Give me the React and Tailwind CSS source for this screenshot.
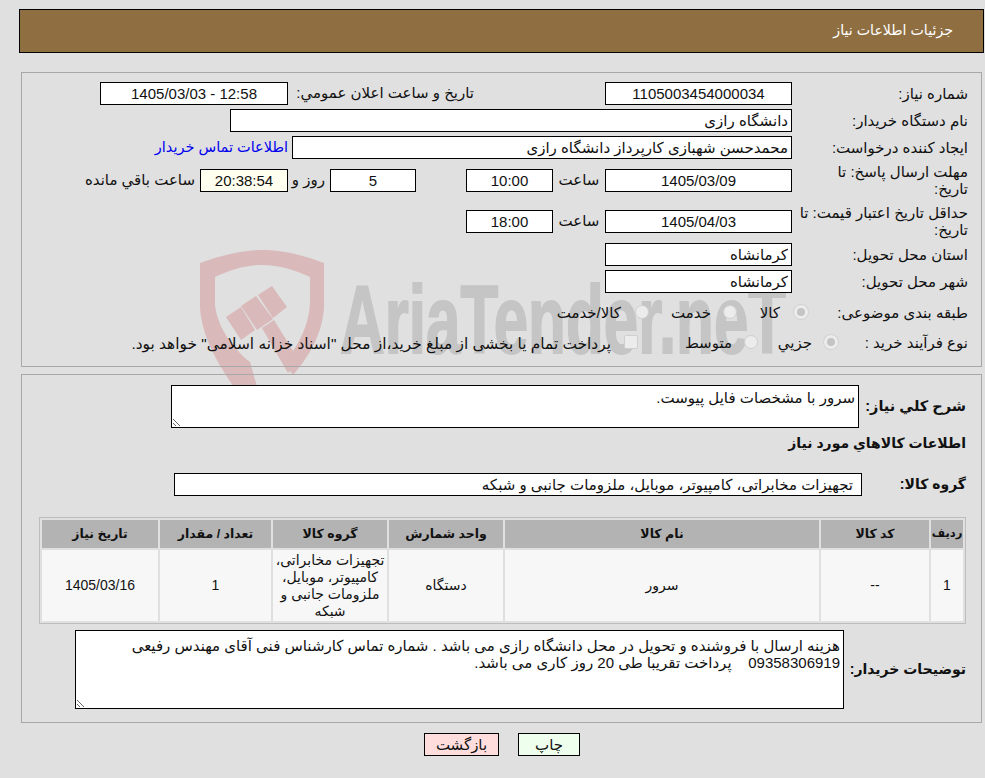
import React from "react";

const FONT = "font-['Liberation_Sans','DejaVu_Sans',sans-serif]";
const FIELD = "h-[23px] shrink-0 border border-black px-[3px] text-[15px] text-[#111] outline-none";
const AREA = "shrink-0 border border-black bg-white px-[3px] text-[15px] leading-[17px] text-[#111] outline-none";

function Field({ value, className = "", bg = "bg-white", center = true }) {
  return (
    <input
      readOnly
      dir="rtl"
      value={value}
      className={`${FIELD} ${bg} ${center ? "text-center" : "text-right"} ${className}`}
    />
  );
}

function Row({ label, className = "", labelWidth = "w-[176px]", children }) {
  return (
    <div className={`flex items-center ${className}`}>
      <div className={`shrink-0 whitespace-nowrap leading-[17px] ${labelWidth}`}>{label}</div>
      {children}
    </div>
  );
}

function Option({ type = "radio", checked = false, label, className = "", gap = "gap-[12px]" }) {
  const shape = type === "radio" ? "rounded-full" : "rounded-[2px]";
  const tone = checked
    ? "border-[3px] border-[#ececec] bg-[#c4c4c4] ring-1 ring-[#d2d2d2]"
    : "border border-[#cfcfcf] bg-[#ececec]";
  return (
    <label className={`flex shrink-0 items-center whitespace-nowrap ${gap} ${className}`}>
      <input
        type={type}
        disabled
        checked={checked}
        readOnly
        className={`h-[14px] w-[14px] shrink-0 appearance-none ${shape} ${tone}`}
      />
      <span className="mt-[3px]">{label}</span>
    </label>
  );
}

function Watermark() {
  return (
    <div className="pointer-events-none absolute inset-0">
      <svg className="absolute left-[195px] top-[245px] h-[145px] w-[135px]" viewBox="195 245 135 145">
        <g fill="#d9b9ba">
          <path d="M262 250C285 250 305 256 324 263V308C322 335 308 358 293 375L285 363C298 345 310 325 310 300V277C295 270 280 265 262 265C245 265 230 270 215 277V305C218 330 235 350 250 362L258 390H236C215 360 202 335 200 308V263C220 256 240 250 262 250Z" />
          <path d="M226 317L241 307L255 330L241 340Z" />
          <path d="M241 306L256 296L273 319L257 330Z" />
          <path d="M258 295L272 286L287 307L273 318Z" />
          <path d="M262 328L274 320L300 362L288 373Z" />
        </g>
      </svg>
      <div className="absolute left-[340px] top-[272px] origin-left scale-x-[0.645] whitespace-nowrap font-['Liberation_Sans',sans-serif] text-[96px] font-bold leading-none text-[#c5c5c5] [-webkit-text-stroke:2px_#c5c5c5]">
        AriaTender.neT
      </div>
    </div>
  );
}

const HEADS = [
  ["ردیف", "w-[32px] text-[11.5px]"],
  ["کد کالا", "w-[108px] text-[12.5px]"],
  ["نام کالا", "w-[314px] text-[12.5px]"],
  ["واحد شمارش", "w-[114px] text-[12.5px]"],
  ["گروه کالا", "w-[114px] text-[12.5px]"],
  ["تعداد / مقدار", "w-[111px] text-[12.5px]"],
  ["تاریخ نیاز", "w-[116px] text-[12.5px]"],
];

const CELLS = [
  "1",
  "--",
  "سرور",
  "دستگاه",
  "تجهیزات مخابراتی، کامپیوتر، موبایل، ملزومات جانبی و شبکه",
  "1",
  "1405/03/16",
];

export default function App() {
  return (
    <div className={`relative min-h-[778px] overflow-hidden bg-[#e0e0e0] text-[15px] text-[#111] ${FONT}`} dir="rtl">
      <Watermark />
      <div className="relative">
        <div className="ml-[19px] mr-[1px] flex h-[44px] translate-y-[9px] items-center border border-black bg-[#8f6f42] pr-[30px] text-[14.2px] text-white">
          جزئیات اطلاعات نیاز
        </div>

        <div className="ml-[21px] mr-[3px] mt-[28px] h-[295px] border border-[#a8a8a8] pr-[13px] pt-[9px]">
          <Row label="شماره نیاز:">
            <Field value="1105003454000034" className="w-[187px]" />
            <div className="w-[317px] shrink-0 whitespace-nowrap pr-[131px]">تاریخ و ساعت اعلان عمومي:</div>
            <Field value="12:58 - 1405/03/03" className="w-[188px]" />
          </Row>
          <Row label="نام دستگاه خریدار:" className="mt-[4px]">
            <Field value="دانشگاه رازی" center={false} className="w-[562px]" />
          </Row>
          <Row label="ایجاد کننده درخواست:" className="mt-[4px]">
            <Field value="محمدحسن شهبازی کارپرداز دانشگاه رازی" center={false} className="w-[500px]" />
            <a href="#" className="mr-[4px] whitespace-nowrap text-[14.5px] text-[#0000ee]">اطلاعات تماس خریدار</a>
          </Row>
          <Row label={<>مهلت ارسال پاسخ: تا<br />تاریخ:</>} className="mt-[4px] h-[34px]">
            <Field value="1405/03/09" className="w-[187px]" />
            <div className="w-[52px] shrink-0 text-center">ساعت</div>
            <Field value="10:00" className="w-[87px]" />
            <div className="w-[50px] shrink-0" />
            <Field value="5" className="w-[86px]" />
            <div className="w-[42px] shrink-0 whitespace-nowrap pr-[5px]">روز و</div>
            <Field value="20:38:54" bg="bg-[#fffff0]" className="w-[88px]" />
            <div className="mr-[5px] whitespace-nowrap">ساعت باقي مانده</div>
          </Row>
          <Row label={<>حداقل تاریخ اعتبار قیمت: تا<br />تاریخ:</>} className="mt-[7px] h-[34px]">
            <Field value="1405/04/03" className="w-[187px]" />
            <div className="w-[52px] shrink-0 text-center">ساعت</div>
            <Field value="18:00" className="w-[87px]" />
          </Row>
          <Row label="استان محل تحویل:" className="mt-[5px]">
            <Field value="کرمانشاه" center={false} className="w-[187px]" />
          </Row>
          <Row label="شهر محل تحویل:" className="mt-[4px]">
            <Field value="کرمانشاه" center={false} className="w-[187px]" />
          </Row>
          <Row label="طبقه بندی موضوعی:" labelWidth="w-[160px]" className="mt-[8px] h-[22px]">
            <Option checked label="کالا" gap="gap-[14px]" className="w-[71px]" />
            <Option label="خدمت" gap="gap-[12px]" className="w-[88px]" />
            <Option label="کالا/خدمت" gap="gap-[14px]" />
          </Row>
          <Row label="نوع فرآیند خرید :" labelWidth="w-[130px]" className="mt-[8px] h-[22px]">
            <Option checked label="جزيي" className="w-[80px]" />
            <Option label="متوسط" className="w-[120px]" />
            <Option
              type="checkbox"
              gap="gap-[13px]"
              className="text-[15.4px]"
              label={'پرداخت تمام یا بخشی از مبلغ خرید،از محل "اسناد خزانه اسلامی" خواهد بود.'}
            />
          </Row>
        </div>

        <div className="ml-[21px] mr-[3px] mt-[7px] h-[349px] border border-[#a8a8a8] pr-[15px] pt-[10px]">
          <div className="flex items-center">
            <div className="w-[107px] shrink-0 whitespace-nowrap text-[14.5px] font-bold">شرح کلي نیاز:</div>
            <textarea
              readOnly
              dir="rtl"
              value="سرور با مشخصات فایل پیوست."
              className={`h-[43px] w-[688px] py-[3px] ${AREA}`}
            />
          </div>
          <div className="mt-[5px] text-[14px] font-bold">اطلاعات کالاهاي مورد نیاز</div>
          <div className="mt-[19px] flex items-center">
            <div className="w-[104px] shrink-0 text-[14px] font-bold">گروه کالا:</div>
            <Field value="تجهیزات مخابراتی، کامپیوتر، موبایل، ملزومات جانبی و شبکه" center={false} className="w-[688px] pr-[8px]" />
          </div>

          <table className="mt-[21px] w-[927px] table-fixed border-separate border-spacing-[2px] border border-[#bdbdbd] text-[14px]">
            <thead>
              <tr>
                {HEADS.map(([h, w]) => (
                  <th key={h} className={`h-[28px] bg-[#b3b3b3] p-0 text-center font-bold ${w}`}>{h}</th>
                ))}
              </tr>
            </thead>
            <tbody>
              <tr>
                {CELLS.map((c, i) => (
                  <td key={i} className="h-[71px] bg-[#f7f7f7] p-0 text-center align-middle leading-[17px]">{c}</td>
                ))}
              </tr>
            </tbody>
          </table>

          <div className="mt-[6px] flex items-center">
            <div className="w-[122px] shrink-0 whitespace-nowrap text-[14px] font-bold">توضیحات خریدار:</div>
            <textarea
              readOnly
              dir="rtl"
              value={"هزینه ارسال با فروشنده و تحویل در محل دانشگاه رازی می باشد . شماره تماس کارشناس فنی آقای مهندس رفیعی\n09358306919    پرداخت تقریبا طی 20 روز کاری می باشد."}
              className={`h-[79px] w-[769px] pb-[3px] pt-[6px] ${AREA}`}
            />
          </div>
        </div>

        <div className="mt-[10px] flex justify-center gap-[19px] pl-[19px]">
          <button className="h-[23px] w-[62px] border border-black bg-[#eeffee] text-[15px]">چاپ</button>
          <button className="h-[23px] w-[75px] border border-black bg-[#ffdddd] text-[15px]">بازگشت</button>
        </div>
      </div>
    </div>
  );
}
